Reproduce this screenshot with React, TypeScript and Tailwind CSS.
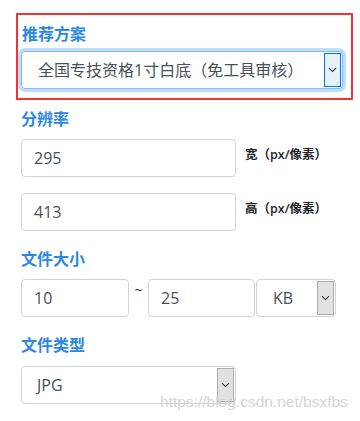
import React from 'react';

const cjk = { fontFamily: '"Open Sans", "Noto Sans CJK SC", sans-serif' };

function Chevron() {
  return (
    <svg width="9" height="6" viewBox="0 0 9 6" className="block">
      <path d="M1 1.2 L4.5 4.6 L8 1.2" fill="none" stroke="#333" strokeWidth="1.1" />
    </svg>
  );
}

function Label({ children, className = '' }: { children: React.ReactNode; className?: string }) {
  return (
    <div className={`h-[24px] leading-[24px] text-[16px] font-bold text-[#2b88e2] ${className}`}>
      {children}
    </div>
  );
}

function TextBox({ value, width }: { value: string; width: string }) {
  return (
    <div
      className={`${width} h-[38px] shrink-0 rounded-[4px] border border-[#ced4da] bg-white pl-[12px] flex items-center text-[16px] text-[#495057]`}
    >
      {value}
    </div>
  );
}

function FakeSelect({
  value,
  width,
  padLeft,
  focused = false,
}: {
  value: string;
  width: string;
  padLeft: string;
  focused?: boolean;
}) {
  return (
    <div
      className={`${width} h-[38px] shrink-0 rounded-[4px] border bg-white flex items-stretch ${
        focused
          ? 'border-[#80bdff] shadow-[0_0_0_3px_rgba(0,123,255,0.25)]'
          : 'border-[#ced4da]'
      }`}
    >
      <div className={`flex-1 flex items-center ${padLeft} text-[16px] text-[#495057] whitespace-nowrap`}>
        {value}
      </div>
      <div
        className={`w-[17px] my-[1px] mr-[1px] flex items-center justify-center border ${
          focused ? 'border-[#0078d7] bg-[#e5f1fb]' : 'border-[#adadad] bg-[#e1e1e1]'
        }`}
      >
        <Chevron />
      </div>
    </div>
  );
}

export default function App() {
  return (
    <div className="relative w-[360px] h-[421px] bg-white overflow-hidden" style={cjk}>
      {/* 推荐方案 (annotated) */}
      <div className="ml-[16px] mt-[13px] w-[337px] h-[87px] border-2 border-[#f03434] pl-[3px] pt-[7px]">
        <Label className="pl-[1px]">推荐方案</Label>
        <div className="mt-[5px]">
          <FakeSelect value="全国专技资格1寸白底（免工具审核）" width="w-[322px]" padLeft="pl-[16px]" focused />
        </div>
      </div>

      <div className="pl-[21px]">
        {/* 分辨率 */}
        <Label className="mt-[7px]">分辨率</Label>
        <div className="mt-[8px] flex items-start">
          <TextBox value="295" width="w-[215px]" />
          <span className="ml-[9px] mt-[7px] text-[12.5px] font-semibold text-[#212529] leading-[18px]">宽（px/像素）</span>
        </div>
        <div className="mt-[16px] flex items-start">
          <TextBox value="413" width="w-[215px]" />
          <span className="ml-[9px] mt-[7px] text-[12.5px] font-semibold text-[#212529] leading-[18px]">高（px/像素）</span>
        </div>

        {/* 文件大小 */}
        <Label className="mt-[16px]">文件大小</Label>
        <div className="mt-[8px] flex items-start">
          <TextBox value="10" width="w-[108px]" />
          <span className="w-[19px] text-center text-[14px] leading-[18px] text-[#212529] mt-[2px]">~</span>
          <TextBox value="25" width="w-[107px]" />
          <div className="ml-[1px]">
            <FakeSelect value="KB" width="w-[80px]" padLeft="pl-[16px]" />
          </div>
        </div>

        {/* 文件类型 */}
        <Label className="mt-[16px]">文件类型</Label>
        <div className="mt-[9px]">
          <FakeSelect value="JPG" width="w-[215px]" padLeft="pl-[15px]" />
        </div>
      </div>

      {/* watermark */}
      <div
        className="absolute left-[160px] top-[393px] text-[15.5px] leading-[18px] text-[#d4d4d4] whitespace-nowrap"
        style={{ fontFamily: '"Liberation Sans", Arial, sans-serif' }}
      >
        https://blog.csdn.net/bsxfbs
      </div>
    </div>
  );
}
